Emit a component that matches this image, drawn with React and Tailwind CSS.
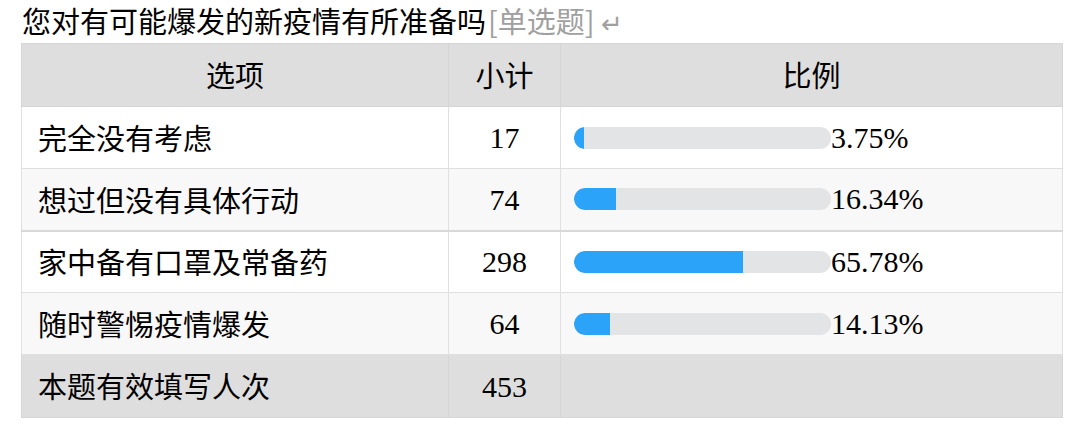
const rows = [
  { label: "完全没有考虑", count: 17, pct: 3.75 },
  { label: "想过但没有具体行动", count: 74, pct: 16.34 },
  { label: "家中备有口罩及常备药", count: 298, pct: 65.78 },
  { label: "随时警惕疫情爆发", count: 64, pct: 14.13 },
];

const font = { fontFamily: '"Liberation Serif", "Noto Sans CJK SC", serif' };
const cjk = { fontFamily: '"Noto Sans CJK SC", sans-serif' };

const Bar = ({ pct }) => (
  <div className="flex items-center">
    <div className="h-[22px] w-[257px] rounded-full bg-[#e3e4e6] overflow-hidden">
      <div className="h-full rounded-l-full bg-[#2ba3f8]" style={{ width: `${pct}%` }} />
    </div>
    <span className="text-[30px] leading-none text-black">{pct.toFixed(2)}%</span>
  </div>
);

export default function App() {
  return (
    <div className="w-[1080px] h-[430px] bg-white text-black overflow-hidden" style={font}>
      {/* TITLE */}
      <div className="h-[43px] pl-[22px] text-[29px] leading-[40px] whitespace-nowrap">
        <span style={cjk}>您对有可能爆发的新疫情有所准备吗</span>
        <span className="text-[#a0a0a0] ml-[2px]" style={cjk}>[单选题]</span>
        <span className="text-[#a0a0a0] text-[26px] ml-[6px]">↵</span>
      </div>

      {/* TABLE */}
      <table className="ml-[21px] w-[1041px] border-collapse table-fixed text-[30px]">
        <colgroup>
          <col className="w-[427px]" />
          <col className="w-[112px]" />
          <col className="w-[502px]" />
        </colgroup>
        <thead>
          <tr className="h-[63px] bg-[#dedede] text-[29px]" style={cjk}>
            <th className="border border-[#d6d6d6] font-normal text-center">选项</th>
            <th className="border border-[#d6d6d6] font-normal text-center">小计</th>
            <th className="border border-[#d6d6d6] font-normal text-center">比例</th>
          </tr>
        </thead>
        <tbody>
          {rows.map((r, i) => (
            <tr
              key={r.label}
              className={`h-[62px] ${i % 2 === 1 ? "bg-[#f8f8f8]" : "bg-white"} ${i === 2 ? "border-t-2 border-t-[#d8d8d8]" : ""}`}
            >
              <td className="border border-[#e0e0e0] pl-[16px] text-[29px]" style={cjk}>{r.label}</td>
              <td className="border border-[#e0e0e0] text-center">{r.count}</td>
              <td className="border border-[#e0e0e0] pl-[13px]">
                <Bar pct={r.pct} />
              </td>
            </tr>
          ))}
          <tr className="h-[63px] bg-[#dedede]">
            <td className="border border-[#d6d6d6] pl-[16px] text-[29px]" style={cjk}>本题有效填写人次</td>
            <td className="border border-[#d6d6d6] text-center">453</td>
            <td className="border border-[#d6d6d6]"></td>
          </tr>
        </tbody>
      </table>
    </div>
  );
}
